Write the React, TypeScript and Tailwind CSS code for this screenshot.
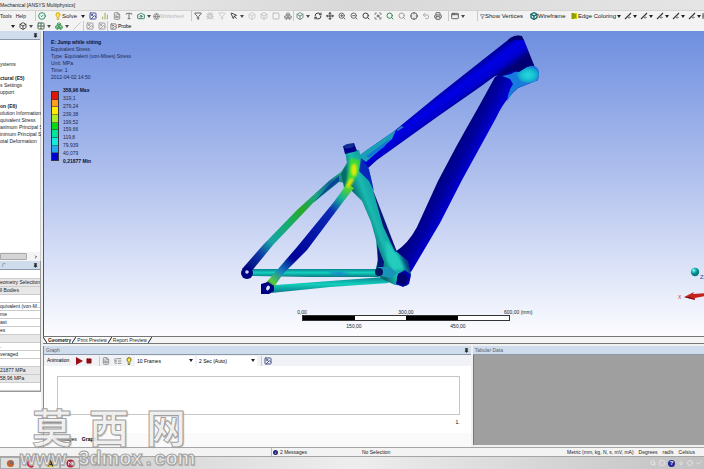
import React from "react";
import {
  ArrowDown, Box, Boxes, Bug, Camera, Check, ChevronRight, Circle, CircleCheck, Crosshair, FileText,
  Filter, Globe, Grid2x2, Image, Lightbulb, ListTree, Move, MousePointer, Pin, Printer,
  RefreshCw, ScanSearch, Search, Slash, Square, Undo2, ZoomIn, ZoomOut, AppWindow, ChartNoAxesColumn, Type,
} from "lucide-react";

type IconType = React.ComponentType<{ className?: string; strokeWidth?: number }>;

function Caret() {
  return (
    <svg viewBox="0 0 4 3" className="h-[3px] w-[4px] shrink-0" aria-hidden="true">
      <path d="M0 0h4L2 3z" fill="#222" />
    </svg>
  );
}

function Tool({ icon: Icon, label, color = "text-[#444]", menu = false }: { icon: IconType; label: string; color?: string; menu?: boolean }) {
  return (
    <button aria-label={label} className={`flex shrink-0 items-center justify-center opacity-80 ${menu ? "w-[18px] gap-[2px]" : "w-[12px]"} ${color}`}>
      <Icon className="h-[8px] w-[8px] shrink-0" strokeWidth={3} />
      {menu && <Caret />}
    </button>
  );
}

function Group({ className, children }: { className: string; children: React.ReactNode }) {
  return <div className={`flex h-[10px] shrink-0 items-center border-l border-[#c9c9c9] ${className}`}>{children}</div>;
}

function EdgeTool({ label }: { label: string }) {
  return (
    <button aria-label={label} className="flex w-[16px] shrink-0 items-center justify-center gap-[1px]">
      <svg viewBox="0 0 8 8" className="h-[8px] w-[8px]" fill="none" stroke="#333">
        <path d="M1 7L7 1" strokeWidth="1.1" />
        <path d="M5 4v3M4 5.500h3" strokeWidth=".7" stroke="#777" />
      </svg>
      <Caret />
    </button>
  );
}

function MainToolbar() {
  return (
    <nav aria-label="Main toolbar" className="flex h-[11px] items-center overflow-hidden border-t border-[#d2d2d2] bg-[#f3f3f3] text-[6px] leading-[10px] text-[#222]">
      <div className="flex w-[35px] shrink-0 gap-[4px] text-[5px]">
        <button>Tools</button>
        <button>Help</button>
      </div>
      <Group className="w-[156px]">
        <Tool icon={CircleCheck} label="Ready" color="text-[#007a45]" />
        <button className="ml-[6px] flex w-[33px] shrink-0 items-center">
          <Lightbulb className="h-[8px] w-[8px] fill-[#ffe54a] text-[#c9a800]" strokeWidth={3} />
          <span className="mr-[4px]">Solve</span>
          <Caret />
        </button>
        <Tool icon={Image} label="New figure" color="text-[#1c2b8a]" />
        <Tool icon={ChartNoAxesColumn} label="New chart" color="text-[#8a9a30]" />
        <Tool icon={FileText} label="Comment" color="text-[#777]" />
        <Tool icon={Type} label="Annotation" color="text-[#555]" />
        <Tool icon={Camera} label="Snapshot" color="text-[#106a40]" menu />
        <button className="flex items-center text-[5px] text-[#b9b9b9]">
          <Globe className="h-[7px] w-[7px] text-[#888]" strokeWidth={3} />
          Worksheet
        </button>
      </Group>
      <Group className="w-[102px]">
        <Tool icon={Filter} label="Filter" />
        <Tool icon={Bug} label="Label" color="text-[#b5b5b5]" />
        <Tool icon={Filter} label="Direction" color="text-[#c5c5c5]" />
        <Tool icon={MousePointer} label="Select mode" color="text-[#222]" menu />
        <Tool icon={Box} label="Vertex" color="text-[#c2c2c2]" />
        <Tool icon={Box} label="Edge" color="text-[#b8b8b8]" />
        <Tool icon={Square} label="Face" color="text-[#b0b0b0]" />
        <Tool icon={Boxes} label="Body" color="text-[#777]" />
      </Group>
      <Group className="w-[155px]">
        <Tool icon={Box} label="Extend" color="text-[#4d7765]" menu />
        <Tool icon={RefreshCw} label="Rotate" color="text-[#111]" />
        <Tool icon={Move} label="Pan" color="text-[#111]" />
        <Tool icon={ZoomIn} label="Zoom" />
        <Tool icon={ZoomOut} label="Box zoom" />
        <Tool icon={Search} label="Zoom to fit" color="text-[#111]" />
        <Tool icon={ScanSearch} label="Magnifier" />
        <Tool icon={Search} label="Previous view" color="text-[#007030]" />
        <Tool icon={Search} label="Next view" color="text-[#888]" />
        <Tool icon={Crosshair} label="Isometric view" />
        <Tool icon={Undo2} label="Look at" color="text-[#999]" />
        <Tool icon={Printer} label="Manage views" />
      </Group>
      <Group className="w-[29px]">
        <Tool icon={AppWindow} label="Viewports" menu />
      </Group>
      <Group className="gap-[1px] pl-[2px]">
        <button className="flex w-[49px] shrink-0 items-center whitespace-nowrap">
          <Filter className="h-[5px] w-[5px]" strokeWidth={2} />
          Show Vertices
        </button>
        <button className="flex w-[40px] shrink-0 items-center">
          <Box className="h-[8px] w-[8px] text-[#156a6a]" strokeWidth={4} />
          Wireframe
        </button>
        <button className="flex w-[51px] shrink-0 items-center gap-[1px] whitespace-nowrap">
          <svg viewBox="0 0 6 6" className="h-[6px] w-[6px] shrink-0" aria-hidden="true"><path d="M0 0h6v6H0z" fill="#c8d400" /><path d="M2 0v6M4 1v4" stroke="#5e6800" /></svg>
          Edge Coloring
          <Caret />
        </button>
      </Group>
      {["Free", "Single", "Double", "Triple", "Multiple"].map((n) => <EdgeTool key={n} label={`${n} edges`} />)}
      <button aria-label="Thicken edges" className="flex shrink-0">
        <svg viewBox="0 0 7 8" className="h-[8px] w-[7px]" stroke="#444" fill="none"><path d="M1 1v6M1 4h5M6 1v6" /></svg>
      </button>
    </nav>
  );
}

function ContextToolbar() {
  return (
    <nav aria-label="Result toolbar" className="flex h-[10px] shrink-0 items-center overflow-hidden bg-[#f3f3f3] pl-[11px] text-[6px] leading-[10px]">
      <div className="flex w-[6px] items-center"><Caret /></div>
      <Tool icon={Box} label="Geometry" color="text-[#222]" menu />
      <Tool icon={Grid2x2} label="Contours" color="text-[#244d2c]" menu />
      <Tool icon={Boxes} label="Edges" color="text-[#188135]" menu />
      <Tool icon={Slash} label="Vectors" color="text-[#bbb]" />
      <Group className="w-[24px]">
        <Tool icon={Image} label="Maximum" color="text-[#888]" />
        <Tool icon={Image} label="Minimum" color="text-[#888]" />
      </Group>
      <Group className="pl-[2px]">
        <button className="flex items-center gap-[1px] text-[5px]"><Image className="h-[7px] w-[7px] text-[#777]" strokeWidth={3} />Probe</button>
      </Group>
    </nav>
  );
}

const tree: [string, boolean][] = [
  ["ystems", false], ["", false], ["ctural (E5)", true], ["s Settings", false], ["upport", false], ["", false],
  ["on (E6)", true], ["olution Information", false], ["quivalent Stress", false], ["aximum Principal Str", false],
  ["inimum Principal Stre", false], ["otal Deformation", false],
];

const details: [string, boolean][] = [
  ["", false], ["eometry Selection", true], ["ll Bodies", true], ["", false], ["quivalent (von-M...", false], ["me", false],
  ["ast", false], ["es", false], ["", true], [".", false], ["veraged", false], ["", false], ["21877 MPa", true], ["58,96 MPa", true], ["", false],
];

function PanelHeader({ title, pin = true }: { title: string; pin?: boolean }) {
  return (
    <header className="flex h-[9px] shrink-0 items-center justify-between border-b border-[#8998aa] bg-[#cfdceb] px-[2px] text-[5px] leading-[8px] text-[#59646f]">
      <span>{title}</span>
      {pin && <button aria-label="Pin panel"><Pin className="h-[5px] w-[5px] fill-[#222] text-[#222]" strokeWidth={3} /></button>}
    </header>
  );
}

function Sidebar() {
  return (
    <aside className="flex w-[41px] shrink-0 flex-col overflow-hidden bg-white text-[5px] text-[#222]">
      <section className="flex h-[230px] shrink-0 flex-col border-r border-[#ccc]">
        <PanelHeader title="" />
        <ul className="mt-[21px] flex-1 whitespace-nowrap leading-[7px]">
          {tree.map(([t, b], i) => <li key={i} className={`h-[7px] ${b ? "font-bold" : ""}`}>{t}</li>)}
        </ul>
        <div className="flex h-[9px] items-center justify-between bg-[#f4f4f4] pr-[2px]">
          <div className="h-[7px] w-[27px] rounded-r-[1px] border border-[#aaa] bg-[#d5d5d5]" />
          <ChevronRight className="h-[4px] w-[4px]" strokeWidth={5} />
        </div>
      </section>
      <section className="border-r border-b border-[#999]">
        <PanelHeader title='/"' />
        <table className="w-full table-fixed border-collapse">
          <tbody>
            {details.map(([t, g], i) => (
              <tr key={i} className={`h-[8px] border-b border-[#ccc] ${g ? "bg-[#e7e7e7]" : ""}`}>
                <td className="overflow-hidden p-0 leading-[7px] whitespace-nowrap">{t}</td>
              </tr>
            ))}
          </tbody>
        </table>
      </section>
    </aside>
  );
}

const bands = ["bg-[#e31400]", "bg-[#ff9d1c]", "bg-[#ffec00]", "bg-[#a8ee25]", "bg-[#00dd12]", "bg-[#00e39a]", "bg-[#11ecdc]", "bg-[#22a9ee]", "bg-[#0000cf]"];
const stresses = ["358,96 Max", "319,1", "279,24", "239,38", "199,52", "159,66", "119,8", "79,939", "40,079", "0,21877 Min"];

function Legend() {
  return (
    <div className="absolute top-[8px] left-[7px] text-[5px] leading-[7px] text-[#1c2850]">
      <p className="font-bold text-[#0a1235]">E: Jump while sitting</p>
      <p>Equivalent Stress</p>
      <p>Type: Equivalent (von-Mises) Stress</p>
      <p>Unit: MPa</p>
      <p>Time: 1</p>
      <p>2012-04-02 14:50</p>
      <div className="mt-[6px] flex h-[78px] gap-[4px]">
        <div className="my-[4px] flex w-[8px] flex-col border border-[#334]">
          {bands.map((b) => <span key={b} className={`flex-1 border-b border-[#3348] last:border-0 ${b}`} />)}
        </div>
        <ol className="flex flex-col">
          {stresses.map((s, i) => (
            <li key={s} className={`flex flex-1 items-center ${i === 0 || i === 9 ? "font-bold text-[#0a1235]" : ""}`}>{s}</li>
          ))}
        </ol>
      </div>
    </div>
  );
}

function Ruler() {
  return (
    <div className="absolute bottom-[7px] left-[232px] w-[260px] text-[5px] leading-[6px] text-[#222]">
      <div className="grid grid-cols-5 text-center">
        <span>0,00</span>
        <span className="col-span-3">300,00</span>
        <span className="pl-[20px] text-left whitespace-nowrap">600,00 (mm)</span>
      </div>
      <div className="mx-[26px] grid h-[6px] grid-cols-4 border border-[#333] bg-white">
        <span className="bg-black" /><span /><span className="bg-black" /><span />
      </div>
      <div className="mx-[26px] grid grid-cols-2 pt-[2px] text-center">
        <span>150,00</span><span>450,00</span>
      </div>
    </div>
  );
}

function FrameModel() {
  return (
    <svg viewBox="44 31 660 305" className="h-full w-full" role="img" aria-label="Bicycle frame stress plot">
      <defs>
        <linearGradient id="tt" gradientUnits="userSpaceOnUse" x1="430" y1="98" x2="444" y2="117">
          <stop offset="0" stopColor="#000098" /><stop offset=".35" stopColor="#0000e6" /><stop offset=".7" stopColor="#0000d0" /><stop offset="1" stopColor="#000074" />
        </linearGradient>
        <linearGradient id="dt" gradientUnits="userSpaceOnUse" x1="447" y1="163" x2="472" y2="176">
          <stop offset="0" stopColor="#000080" /><stop offset=".4" stopColor="#0000a2" /><stop offset=".8" stopColor="#0000d6" /><stop offset="1" stopColor="#000086" />
        </linearGradient>
        <linearGradient id="stay1" gradientUnits="userSpaceOnUse" x1="343" y1="173" x2="246" y2="272">
          <stop offset="0" stopColor="#15a878" /><stop offset=".12" stopColor="#14658e" /><stop offset=".25" stopColor="#16a584" /><stop offset=".4" stopColor="#28a82a" /><stop offset=".55" stopColor="#15ac70" /><stop offset=".72" stopColor="#18a3a5" /><stop offset=".84" stopColor="#1038a8" /><stop offset="1" stopColor="#000078" />
        </linearGradient>
        <linearGradient id="stay2" gradientUnits="userSpaceOnUse" x1="350" y1="185" x2="268" y2="289">
          <stop offset="0" stopColor="#70d51c" /><stop offset=".12" stopColor="#16b497" /><stop offset=".24" stopColor="#0b2cb5" /><stop offset=".7" stopColor="#000098" /><stop offset=".84" stopColor="#1786c0" /><stop offset=".94" stopColor="#59cf35" /><stop offset="1" stopColor="#001080" />
        </linearGradient>
        <linearGradient id="st" gradientUnits="userSpaceOnUse" x1="366" y1="227" x2="390" y2="218">
          <stop offset="0" stopColor="#066970" /><stop offset=".4" stopColor="#19b9b0" /><stop offset=".8" stopColor="#11a0a3" /><stop offset="1" stopColor="#063e88" />
        </linearGradient>
        <linearGradient id="cs" x1="0" y1="0" x2="0" y2="1">
          <stop offset="0" stopColor="#0a8293" /><stop offset=".45" stopColor="#13d0bc" /><stop offset="1" stopColor="#087986" />
        </linearGradient>
        <radialGradient id="hd"><stop offset="0" stopColor="#25dadb" /><stop offset=".6" stopColor="#16bfd0" /><stop offset="1" stopColor="#1790d6" /></radialGradient>
        <radialGradient id="ball" cx=".35" cy=".3"><stop offset="0" stopColor="#b4ffff" /><stop offset=".45" stopColor="#1dc2bd" /><stop offset="1" stopColor="#087b80" /></radialGradient>
        <filter id="soft"><feGaussianBlur stdDeviation="1.1" /></filter>
      </defs>
      {/* down tube and head tube */}
      <path d="M500 74L495 77C483 99 470 122 456 147L438 181L417 227Q408 244 395 252L393 262L411 272L440 223L462 180L496 118Q504 100 518 88L538 80L539 72L533 64L512 66Z" fill="url(#dt)" />
      <path d="M511 74L525 66Q538 64 539 72L538 80L528 84L518 88Q511 93 507 102Q508 91 513 84L510 79L502 76Z" fill="#167bdd" />
      <ellipse cx="528" cy="75" rx="11" ry="8" fill="url(#hd)" />
      {/* top tube */}
      <path d="M508 40Q514 35 521 36L524 40L534 65L527 67L519 72L511 71L507 74L495 76L480 87L437 117L377 160L367 169L358 157L367 150L393 132L437 96L480 62Z" fill="url(#tt)" />
      <path d="M508 40Q514 34 522 36L524 41Q515 37 509 43Z" fill="#00006c" />
      <path d="M358 156L396 130L392 139L366 162Z" fill="#19a0b8" />
      <path d="M366 156L391 138L384 147L369 158Z" fill="#1276d7" />
      <path d="M396 130L401 126L404 127L398 131Z" fill="#2673bc" />
      {/* chain stays */}
      <path d="M249 269L310 269L379 269L379 277L310 277L249 276Z" fill="url(#cs)" />
      <path d="M331 272h10l9 2-10 1-12-2z" fill="#1683cf" filter="url(#soft)" />
      {/* seat stays */}
      <path d="M347 163L341 172L330 180L297 210L263 245L242 269L251 272L273 245L313 203L339 182L347 183Z" fill="url(#stay1)" />
      <path d="M332 182L339 176L339 181L330 188L314 202Z" fill="#07439b" />
      <path d="M275 285L330 281L384 277L389 283L330 287L271 293Z" fill="url(#cs)" />
      {/* seat tube */}
      <path d="M345 151L359 150Q361 161 367 166Q371 176 373 190L385 227L397 252L408 261L411 274L407 286L395 285L382 279L375 272L378 260L376 240L371 222L362 201L351 190L344 187L341 174L347 163Z" fill="url(#st)" />
      <path d="M347 184L333 203L297 247L265 284L274 287L283 274L307 250L343 202L354 188Z" fill="url(#stay2)" />
      <path d="M379 250L384 262L382 276L376 275Q379 264 377 244Z" fill="#00147c" />
      <path d="M361 158L369 169L374 191L369 181L359 171Z" fill="#0629bb" />
      <path d="M373 190L397 252L395 252L383 226Z" fill="#071477" />
      <path d="M386 240L399 257L404 269L393 270L387 260Z" fill="#22cdbd" filter="url(#soft)" />
      <path d="M378 267L390 267L397 273L391 278L380 276Z" fill="#1695b8" />
      <g filter="url(#soft)">
        <path d="M350 158L360 160L358 174L350 187L343 193L347 180Z" fill="#3bdb35" />
        <ellipse cx="354" cy="170" rx="2.5" ry="6" fill="#e5ea00" />
        <ellipse cx="350" cy="183" rx="2" ry="5" fill="#e0e500" transform="rotate(30 350 183)" />
      </g>
      <path d="M343 146L354 143L357 151L345 154Z" fill="#00008c" />
      <ellipse cx="349" cy="146" rx="5" ry="2.300" fill="#142f90" transform="rotate(-12 349 146)" />
      {/* bottom bracket and drop-outs */}
      <path d="M398 274L405 270L411 275L409 284L403 287L396 284Z" fill="#0000a8" />
      <ellipse cx="402" cy="279" rx="5" ry="6" fill="#000071" />
      <circle cx="379" cy="272" r="4" fill="#081361" />
      <circle cx="247" cy="273" r="6" fill="#000083" /><circle cx="247" cy="272" r="1.8" fill="#c5d5f6" />
      <path d="M261 284L268 282L274 286L274 291L269 294L261 294Z" fill="#000083" /><ellipse cx="268" cy="288" rx="1.7" ry="2.6" fill="#e0e9fc" transform="rotate(25 268 288)" />
      {/* orientation triad */}
      <circle cx="695" cy="272" r="4.2" fill="url(#ball)" />
      <path d="M684 297L694 292L693 294L706 293L706 296L695 298L695 300Z" fill="#c62320" />
      <path d="M684 297L690 297L695 300Z" fill="#681014" />
      <text x="678" y="299" fontSize="5" fill="#b33d4c">X</text>
      <text x="700" y="279" fontSize="6" fill="#3546a0">Z</text>
    </svg>
  );
}

function ViewTabs() {
  return (
    <div role="tablist" aria-label="Views" className="flex h-[8px] shrink-0 items-center border-y border-[#777] bg-[#f4f4f4] text-[5px] leading-[6px] text-[#222]">
      {["Geometry", "Print Preview", "Report Preview"].map((t, i) => (
        <React.Fragment key={t}>
          {i === 0 && <svg viewBox="0 0 4 6" className="h-[6px] w-[4px]" aria-hidden="true"><path d="M0 0l4 6" stroke="#222" /></svg>}
          <button role="tab" aria-selected={i === 0} className={`bg-white px-[1px] whitespace-nowrap ${i === 0 ? "font-bold" : ""}`}>{t}</button>
          <svg viewBox="0 0 4 6" className="h-[6px] w-[4px]" aria-hidden="true"><path d="M4 0L0 6" stroke="#222" /></svg>
        </React.Fragment>
      ))}
    </div>
  );
}

function Picker({ label, value }: { label: string; value: string }) {
  return (
    <label className="relative flex h-[10px] w-[60px] items-center bg-white">
      <span className="sr-only">{label}</span>
      <select className="h-[10px] w-full appearance-none pl-[2px] text-[5px] leading-[10px]"><option>{value}</option></select>
      <span className="pointer-events-none absolute right-[2px] flex"><Caret /></span>
    </label>
  );
}

function GraphPanel() {
  return (
    <section className="flex min-w-0 flex-1 flex-col border-l border-[#888] bg-white">
      <PanelHeader title="Graph" />
      <div className="flex h-[11px] items-center gap-[2px] bg-[#f0f2f6] pl-[3px] text-[5px]">
        <span className="w-[26px]">Animation</span>
        <button aria-label="Play" className="w-[9px]">
          <svg viewBox="0 0 8 8" className="h-[8px] w-[8px]"><path d="M1 0L8 4L1 8Z" fill="#9a0d14" /></svg>
        </button>
        <button aria-label="Stop" className="mr-[3px] w-[8px]"><Square className="h-[6px] w-[6px] fill-[#8c0c18] text-[#8c0c18]" /></button>
        <Group className="w-[24px]">
          <Tool icon={FileText} label="Distributed" color="text-[#777]" />
          <Tool icon={ListTree} label="Result sets" color="text-[#777]" />
        </Group>
        <button aria-label="Update contours" className="w-[8px]"><Lightbulb className="h-[8px] w-[8px] fill-[#ffee3e] text-[#6a6500]" strokeWidth={3} /></button>
        <Picker label="Frames" value="10 Frames" />
        <Picker label="Duration" value="2 Sec (Auto)" />
        <Group className="ml-[2px]"><Tool icon={Image} label="Export video" color="text-[#1b2b70]" /></Group>
      </div>
      <div className="mt-[10px] mr-[11px] ml-[13px] h-[39px] border border-[#c6c6c6]" />
      <div className="flex h-[18px] items-start justify-between pt-[5px] pr-[11px] text-[5px] leading-[5px]">
        <span className="mt-[2px] h-px w-[17px] bg-[#777]" />
        <span>1.</span>
      </div>
      <div role="tablist" aria-label="Output" className="flex flex-1 items-center gap-[5px] bg-[#fafafa] pl-[10px] text-[5px]">
        <button role="tab" aria-selected="false">Messages</button>
        <button role="tab" aria-selected="true" className="font-bold">Graph</button>
      </div>
    </section>
  );
}

function StatusBar() {
  return (
    <footer className="flex h-[10px] shrink-0 items-center border-y border-[#a5a5a5] bg-[#f3f3f3] text-[5px] leading-[8px] text-[#222]">
      <div className="w-[271px] shrink-0" />
      <div className="flex w-[91px] shrink-0 items-center gap-[2px] border-l border-[#bbb] pl-[1px]">
        <span className="h-[5px] w-[5px] rounded-full bg-[#202878] text-center text-[4px] leading-[5px] text-white">i</span>
        2 Messages
      </div>
      <span className="flex-1">No Selection</span>
      <div className="flex gap-[5px] pr-[9px]">
        <span>Metric (mm, kg, N, s, mV, mA)</span><span>Degrees</span><span>rad/s</span><span>Celsius</span>
      </div>
    </footer>
  );
}

function TaskBar() {
  return (
    <div className="flex h-[12px] shrink-0 items-center bg-linear-to-r from-[#c6c6c6] via-[#eeeeee] to-[#c2c2c2]">
      {[
        { n: "Firefox", art: <><circle cx="5" cy="5" r="4" fill="#c5632b" /><circle cx="6" cy="4" r="2" fill="#776a7a" /></> },
        { n: "CATIA", art: <path d="M8 2.500A3.500 3.500 0 1 0 8 7.500" fill="none" stroke="#d3202b" strokeWidth="2" /> },
        { n: "ANSYS", art: <><path d="M1 1h8v8H1z" fill="#e4c32d" /><path d="M2.500 8L5 2L7.500 8M3.500 6h3" fill="none" stroke="#222" strokeWidth="1.300" /></> },
        { n: "Mechanical", art: <><circle cx="5" cy="5" r="4.500" fill="#b51e34" /><path d="M3 7V3l2 2 2-2v4" fill="none" stroke="#fff" /></> },
      ].map((a) => (
        <button key={a.n} aria-label={a.n} className="flex h-[12px] w-[20px] items-center justify-center border border-[#aaa] bg-[#dedede]">
          <svg viewBox="0 0 10 10" className="h-[9px] w-[9px]" aria-hidden="true">{a.art}</svg>
        </button>
      ))}
      <div className="ml-auto flex items-center gap-[3px] pr-[2px] text-[#fafafa]">
        <Search className="h-[6px] w-[6px]" /><Square className="h-[6px] w-[6px]" />
        <span className="h-[7px] w-[7px] rounded-full bg-[#232694] text-center text-[6px] leading-[7px] font-bold">?</span>
        <ArrowDown className="h-[6px] w-[6px]" /><Circle className="h-[6px] w-[6px]" /><Check className="h-[6px] w-[6px]" />
      </div>
    </div>
  );
}

function Watermark() {
  return (
    <div className="pointer-events-none absolute bottom-0 left-[20px] text-[#ffffffc0] [-webkit-text-stroke:1px_#a0a0a0] [text-shadow:1px_1px_1px_#9999]">
      <div className="flex gap-[17px] pl-[12px] font-['Noto_Sans_CJK_SC',sans-serif] text-[40px] leading-[42px] font-bold">
        <span>莫</span><span>西</span><span>网</span>
      </div>
      <div className="flex gap-[3px] text-[20px] leading-[22px] font-bold">
        <span>www</span><span>.</span><span>3dmox</span><span>.</span><span>com</span>
      </div>
    </div>
  );
}

export default function App() {
  return (
    <div className="relative flex h-screen flex-col overflow-hidden bg-[#f0f0f0] font-['Liberation_Sans',Arial,sans-serif]">
      <h1 className="h-[10px] shrink-0 bg-linear-to-r from-[#efefef] via-[#d8d8d8] to-[#e5e5e5] text-[5px] leading-[10px] text-[#222]">Mechanical [ANSYS Multiphysics]</h1>
      <MainToolbar />
      <ContextToolbar />
      <div className="flex min-h-0 flex-1 gap-[2px]">
        <Sidebar />
        <main className="flex min-w-0 flex-1 flex-col">
          <div className="relative min-h-0 flex-1 border-l border-[#555] bg-linear-to-b from-[#6e8edf] via-[#b4c3ee] to-[#fdfdff]">
            <FrameModel />
            <Legend />
            <Ruler />
          </div>
          <ViewTabs />
          <div className="mt-[2px] flex h-[101px] shrink-0 gap-[2px]">
            <GraphPanel />
            <section className="flex w-[35%] flex-col pb-[2px]">
              <PanelHeader title="Tabular Data" pin={false} />
              <div className="flex-1 border-l border-[#777] bg-[#9f9f9f]" />
            </section>
          </div>
        </main>
      </div>
      <StatusBar />
      <TaskBar />
      <Watermark />
    </div>
  );
}
